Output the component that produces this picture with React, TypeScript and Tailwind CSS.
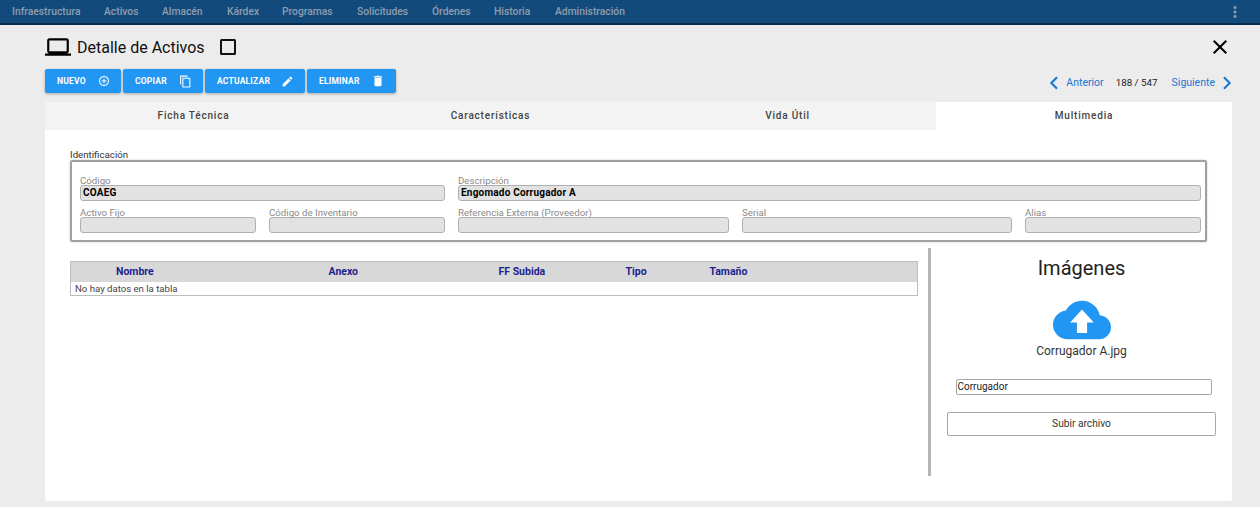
import type { ReactNode } from 'react';
import {
  MdAddCircleOutline,
  MdClose,
  MdContentCopy,
  MdDelete,
  MdEdit,
  MdLaptop,
  MdMoreVert,
} from 'react-icons/md';

const menu = [
  { label: 'Infraestructura', width: 'w-[92px]' },
  { label: 'Activos', width: 'w-[58px]' },
  { label: 'Almacén', width: 'w-[65px]' },
  { label: 'Kárdex', width: 'w-[55px]' },
  { label: 'Programas', width: 'w-[75px]' },
  { label: 'Solicitudes', width: 'w-[75px]' },
  { label: 'Órdenes', width: 'w-[62px]' },
  { label: 'Historia', width: 'w-[61px]' },
  { label: 'Administración', width: 'w-[80px]' },
];

const tabs = ['Ficha Técnica', 'Características', 'Vida Útil', 'Multimedia'];

function ActionButton({ label, width, icon }: { label: string; width: string; icon: ReactNode }) {
  return (
    <button className={`flex h-6 items-center justify-between rounded-[2px] bg-[#2196f3] pl-[12px] pr-[11px] text-[8.5px] font-bold tracking-[0.2px] text-white shadow-[0_1px_3px_rgba(0,0,0,0.3)] ${width}`}>
      <span>{label}</span>
      {icon}
    </button>
  );
}

function Field({ label, value, width }: { label: string; value?: string; width: string }) {
  return (
    <div className={width}>
      <div className="relative top-[3px] h-[15px] text-[9.7px] leading-[15px] text-[#8a8a8a]">{label}</div>
      <div className="h-4 rounded-[3px] border border-[#b0b0b0] bg-[#e2e2e2] pl-[2px] text-[10px] font-bold leading-[14px] tracking-[0.2px] text-black">
        {value}
      </div>
    </div>
  );
}

export default function App() {
  return (
    <div className="h-[507px] w-[1260px] overflow-hidden bg-[#ececec] font-['Roboto',sans-serif]">
      <nav className="flex h-[25px] items-center justify-between border-b-2 border-[#062b4f] bg-[#124b7b] pl-3 pr-[16px]">
        <div className="flex text-[10.3px] font-medium text-[#8e9dae]">
          {menu.map((item) => (
            <span key={item.label} className={`whitespace-nowrap ${item.width}`}>{item.label}</span>
          ))}
        </div>
        <MdMoreVert className="h-[18px] w-[18px] text-[#8e9dae]" />
      </nav>

      <div className="flex h-[44px] items-center justify-between pl-[45px] pr-[28px]">
        <div className="flex items-center">
          <MdLaptop className="h-[26px] w-[26px] text-black" />
          <h1 className="relative top-[1px] ml-[6px] text-[16px] text-[#111]">Detalle de Activos</h1>
          <svg viewBox="0 0 16 16" className="ml-[15px] h-4 w-4" fill="none" stroke="#111" strokeWidth="2">
            <rect x="1" y="1" width="14" height="14" rx="0.5" />
          </svg>
        </div>
        <MdClose className="h-[24px] w-[24px] text-black" />
      </div>

      <div className="flex h-[33px] items-start justify-between pl-[45px] pr-[28px]">
        <div className="flex gap-[2px]">
          <ActionButton label="NUEVO" width="w-[76px]" icon={<MdAddCircleOutline className="h-3 w-3" />} />
          <ActionButton label="COPIAR" width="w-[80px]" icon={<MdContentCopy className="h-[13px] w-[13px]" />} />
          <ActionButton label="ACTUALIZAR" width="w-[100px]" icon={<MdEdit className="h-[13px] w-[13px]" />} />
          <ActionButton label="ELIMINAR" width="w-[89px]" icon={<MdDelete className="h-[14px] w-[14px]" />} />
        </div>
        <div className="mt-[2px] flex h-[24px] items-center text-[10.5px] text-[#1976d2]">
          <svg viewBox="0 0 10 16" className="h-[14px] w-[10px]" fill="none" stroke="currentColor" strokeWidth="2.4">
            <path d="M8.5 1.5 2 8l6.5 6.5" />
          </svg>
          <span className="ml-[7px]">Anterior</span>
          <span className="ml-[12px] text-[9.8px] text-[#222]">188 / 547</span>
          <span className="ml-[14px]">Siguiente</span>
          <svg viewBox="0 0 10 16" className="ml-[7px] h-[14px] w-[10px]" fill="none" stroke="currentColor" strokeWidth="2.4">
            <path d="M1.5 1.5 8 8l-6.5 6.5" />
          </svg>
        </div>
      </div>

      <main className="mx-[45px] h-[399px] w-[1187px] rounded-[2px] bg-white">
        <div className="grid h-[28px] grid-cols-[297px_297px_297px_296px] bg-[#f3f3f3]">
          {tabs.map((tab, i) => (
            <div key={tab} className={`flex items-center justify-center pb-[2px] text-[10px] font-medium tracking-[0.8px] text-[#444] ${i === 3 ? 'bg-white' : ''}`}>
              {tab}
            </div>
          ))}
        </div>

        <div className="pl-[25px] pr-[16px]">
          <div className="mt-[19px] h-[11px] text-[9.7px] leading-[11px] text-[#333]">Identificación</div>
          <fieldset className="h-[82px] w-[1137px] rounded-[2px] border-2 border-[#a0a0a0] pl-[8px] pr-[4px] pt-[8px] shadow-[0_0_2px_rgba(0,0,0,0.25)]">
            <div className="flex gap-[13px]">
              <Field label="Código" value="COAEG" width="w-[365px]" />
              <Field label="Descripción" value="Engomado Corrugador A" width="w-[743px]" />
            </div>
            <div className="mt-[1px] flex gap-[13px]">
              <Field label="Activo Fijo" width="w-[176px]" />
              <Field label="Código de Inventario" width="w-[176px]" />
              <Field label="Referencia Externa (Proveedor)" width="w-[271px]" />
              <Field label="Serial" width="w-[270px]" />
              <Field label="Alias" width="w-[176px]" />
            </div>
          </fieldset>

          <div className="mt-[6px] flex">
            <div className="w-[848px] pt-[13px]">
              <table className="w-full table-fixed border border-[#bdbdbd] text-left">
                <colgroup>
                  <col className="w-[258px]" />
                  <col className="w-[170px]" />
                  <col className="w-[127px]" />
                  <col className="w-[84px]" />
                  <col />
                </colgroup>
                <thead>
                  <tr className="h-[20px] bg-[#d8d8d8] text-[10.5px] font-bold text-[#1f1f8f]">
                    <th className="pl-[45px] font-bold">Nombre</th>
                    <th className="font-bold">Anexo</th>
                    <th className="font-bold">FF Subida</th>
                    <th className="font-bold">Tipo</th>
                    <th className="font-bold">Tamaño</th>
                  </tr>
                </thead>
                <tbody>
                  <tr className="h-[14px]">
                    <td colSpan={5} className="pl-[4px] text-[9.6px] leading-[13px] text-[#444]">No hay datos en la tabla</td>
                  </tr>
                </tbody>
              </table>
            </div>

            <div className="ml-[10px] h-[228px] w-[3px] bg-[#b4b4b4]" />

            <section className="ml-[16px] flex w-[269px] flex-col items-center">
              <h2 className="mt-[8px] text-[20px] leading-[24px] text-[#222]">Imágenes</h2>
              <svg viewBox="0 0 24 24" className="mt-[11px] h-[58px] w-[58px]">
                <path fill="#2196f3" d="M19.35 10.04C18.67 6.59 15.64 4 12 4 9.11 4 6.6 5.64 5.35 8.04 2.34 8.36 0 10.91 0 14c0 3.31 2.69 6 6 6h13c2.76 0 5-2.24 5-5 0-2.64-2.05-4.78-4.65-4.96z" />
                <path fill="#fff" d="M12 7.7 16.9 13h-2.8v4.4H9.9V13H7.1z" />
              </svg>
              <div className="mt-[-5px] text-[12px] leading-[14px] text-[#333]">Corrugador A.jpg</div>
              <input
                readOnly
                value="Corrugador"
                className="mt-[21px] ml-[4px] h-4 w-[256px] rounded-[2px] border border-[#a6a6a6] bg-white pb-[1px] pl-[1px] text-[10px] text-[#222] outline-none"
              />
              <button className="mt-[17px] h-6 w-[269px] rounded-[2px] border border-[#a6a6a6] bg-white pb-[1px] text-[10.2px] text-[#333]">
                Subir archivo
              </button>
            </section>
          </div>
        </div>
      </main>
    </div>
  );
}
